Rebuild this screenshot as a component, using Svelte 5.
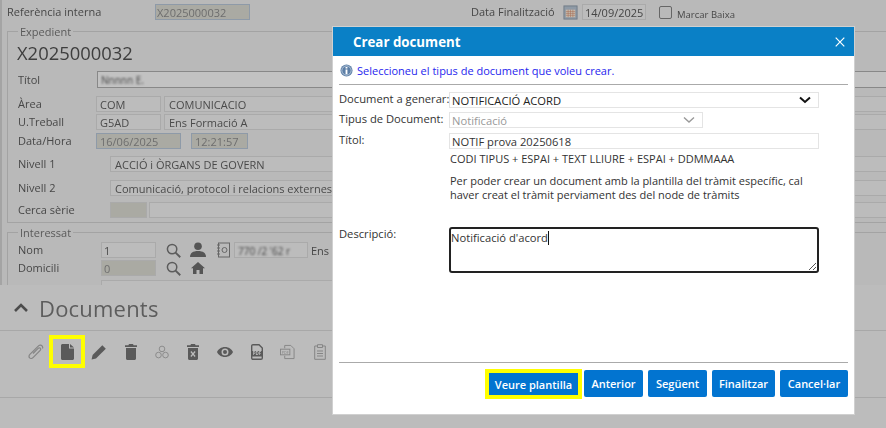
<script>
  const toolIcons = [
    { name: 'pencil', w: 16, vb: '0 0 16 16', d: 'M11.300 1.200l3.500 3.500L5 14.500l-4.400 1 1-4.500z' },
    { name: 'trash', w: 12, vb: '0 0 12 16', d: 'M4 0h4l.6 1.300H12v1.600H0V1.300h3.400zM1 4h10v10.500c0 .8-.7 1.500-1.500 1.500h-7C1.700 16 1 15.300 1 14.500z' },
    { name: 'recycle', light: true, w: 14, vb: '0 0 16 16', d: 'M4.800 4.500a3.200 3.200 0 106.400 0 3.200 3.200 0 10-6.400 0zM.8 11.500a3.200 3.200 0 106.400 0 3.200 3.200 0 10-6.400 0zM8.800 11.500a3.200 3.200 0 106.400 0 3.200 3.200 0 10-6.400 0z', stroke: true },
    { name: 'trashx', w: 12, vb: '0 0 12 16', d: 'M4 0h4l.6 1.300H12v1.600H0V1.300h3.400zM1 4h10v10.500c0 .8-.7 1.500-1.500 1.500h-7C1.700 16 1 15.300 1 14.500zM4.400 7L3.400 8l1.700 2-1.700 2 1 1L6 11l1.600 2 1-1-1.700-2 1.700-2-1-1L6 9z', evenodd: true },
    { name: 'eye', w: 16, vb: '0 0 16 12', d: 'M8 1c3.800 0 6.800 2.200 8 5-1.200 2.800-4.200 5-8 5S1.200 8.800 0 6c1.200-2.800 4.200-5 8-5zm0 1.500a3.500 3.500 0 100 7 3.500 3.500 0 000-7zm0 1.500a2 2 0 110 4 2 2 0 010-4z', evenodd: true }
  ];
</script>

<div class="page">
  <div class="strip"></div>
  <div class="soft">
  <div class="form">
    <div class="top">
      <span class="lab ref">Referència interna</span>
      <span class="fld ro refv">X2025000032</span>
      <span class="lab fin">Data Finalització</span>
      <svg class="cal" viewBox="0 0 16 16" width="15" height="15" aria-hidden="true">
        <rect x="1" y="1" width="14" height="14" fill="#8f9aa6" stroke="#6f7a86"/>
        <rect x="3" y="5" width="10" height="8" fill="#c5b9ab"/>
        <path d="M3 7h10M3 9h10M3 11h10M5.500 5v8M8 5v8M10.500 5v8" stroke="#a8705a" stroke-width=".6"/>
      </svg>
      <span class="fld date">14/09/2025</span>
      <span class="check"></span>
      <span class="baixa">Marcar Baixa</span>
    </div>

    <fieldset class="expedient">
      <legend>Expedient</legend>
      <div class="bigcode">X2025000032</div>
      <div class="row titol"><span class="lab l1">Títol</span><span class="fld tit"><span class="smudge">Nnnnn E.</span></span></div>
      <div class="row area"><span class="lab l1">Àrea</span><span class="fld c1">COM</span><span class="fld c2">COMUNICACIO</span></div>
      <div class="row treball"><span class="lab l1">U.Treball</span><span class="fld c1">G5AD</span><span class="fld c2">Ens Formació A</span></div>
      <div class="row hora"><span class="lab l1">Data/Hora</span><span class="fld ro d1">16/06/2025</span><span class="fld ro d2">12:21:57</span></div>
      <div class="row n1"><span class="lab l2">Nivell 1</span><span class="fld wide">ACCIÓ i ÒRGANS DE GOVERN</span></div>
      <div class="row n2"><span class="lab l2">Nivell 2</span><span class="fld wide">Comunicació, protocol i relacions externes</span></div>
      <div class="row serie"><span class="lab l2">Cerca sèrie</span><span class="fld ro s1"></span><span class="fld s2"></span></div>
    </fieldset>

    <fieldset class="interessat">
      <legend>Interessat</legend>
      <div class="row nom">
        <span class="lab l3">Nom</span><span class="fld i1">1</span>
        <svg class="search" viewBox="0 0 16 16" width="15" height="15" aria-hidden="true"><circle cx="6.500" cy="6.500" r="5" fill="none" stroke="#5c5c5c" stroke-width="1.600"/><path d="M10.200 10.200l5 5" stroke="#5c5c5c" stroke-width="2"/></svg>
        <svg class="person" viewBox="0 0 16 16" width="16" height="16" aria-hidden="true"><circle cx="8" cy="4.200" r="3.800" fill="#555"/><path d="M0 15c0-4 3-6 8-6s8 2 8 6z" fill="#555"/></svg>
        <svg class="book" viewBox="0 0 13 16" width="13" height="16" aria-hidden="true"><rect x="1.500" y="1" width="11" height="14" fill="none" stroke="#666"/><path d="M0 3h3M0 6h3M0 9h3M0 12h3" stroke="#666"/><circle cx="7.500" cy="8" r="2.500" fill="none" stroke="#666"/></svg>
        <span class="fld i2"><span class="smudge">770 /2 '62 r</span></span>
        <span class="ens">Ens I</span>
      </div>
      <div class="row dom">
        <span class="lab l3">Domicili</span><span class="fld ro i1 plain">0</span>
        <svg class="search" viewBox="0 0 16 16" width="15" height="15" aria-hidden="true"><circle cx="6.500" cy="6.500" r="5" fill="none" stroke="#5c5c5c" stroke-width="1.600"/><path d="M10.200 10.200l5 5" stroke="#5c5c5c" stroke-width="2"/></svg>
        <svg class="home" viewBox="0 0 14 12" width="14" height="12" aria-hidden="true"><path d="M7 0l7 6.300h-2V12H8.500V8h-3v4H2V6.300H0z" fill="#555"/></svg>
      </div>
      <span class="fld stub"></span>
    </fieldset>
  </div>

  <section class="docs">
    <div class="docs-head">
      <svg class="chev" viewBox="0 0 16 10" width="16" height="10" aria-hidden="true"><path d="M2 8l6-6 6 6" fill="none" stroke="#4c4c4c" stroke-width="2.600"/></svg>
      <h2>Documents</h2>
    </div>
    <div class="tools">
      <svg class="tool clip" viewBox="0 0 16 16" width="16" height="16" aria-hidden="true"><path d="M14.500 4.500c.8-1.500-.6-3.500-2.500-3.300-.8.1-1.400.5-2 1.100L1.900 10.400c-1.100 1.100-1.200 2.500-.3 3.400s2.300.9 3.400-.2l7.200-7.200c.7-.7.7-1.600.1-2.200s-1.500-.5-2.200.2L5 9.500" fill="none" stroke="currentColor" stroke-width="1.200"/></svg>
      <span class="hl"><svg viewBox="0 0 13 16" width="13" height="16" aria-hidden="true"><path d="M1.500 0H8v4.500h5v10c0 .8-.7 1.500-1.500 1.500h-10C.7 16 0 15.300 0 14.500v-13C0 .7.700 0 1.500 0zM9 0l4 3.500H9z" fill="#5a5a5a"/></svg></span>
      {#each toolIcons as icon}
        {#if icon.stroke}
          <svg class="tool light" viewBox={icon.vb} width={icon.w} height="16" aria-hidden="true"><path d={icon.d} fill="none" stroke="currentColor" stroke-width="1"/></svg>
        {:else}
          <svg class="tool" viewBox={icon.vb} width={icon.w} height="16" aria-hidden="true"><path d={icon.d} fill="currentColor" fill-rule={icon.evenodd ? 'evenodd' : 'nonzero'}/></svg>
        {/if}
      {/each}
      <svg class="tool" viewBox="0 0 12 16" width="12" height="16" aria-hidden="true">
        <path d="M2 .7h6L11.300 4v10c0 .7-.6 1.300-1.300 1.300H2c-.7 0-1.300-.6-1.300-1.300V2C.7 1.300 1.300.7 2 .7z" fill="none" stroke="currentColor" stroke-width="1.400"/>
        <rect x=".5" y="7" width="11" height="5.500" fill="currentColor"/>
        <text x="6" y="11.300" font-size="4.500" font-weight="700" text-anchor="middle" fill="#bcbcbc">PDF</text>
      </svg>
      <svg class="tool light copy" viewBox="0 0 16 16" width="15" height="16" aria-hidden="true">
        <path d="M5 4V1h6.500L15 4.500V15H5v-3" fill="none" stroke="currentColor"/>
        <rect x=".5" y="5" width="10" height="6" fill="none" stroke="currentColor"/>
        <text x="5.500" y="9.600" font-size="4" text-anchor="middle" fill="currentColor">PDF</text>
      </svg>
      <svg class="tool light" viewBox="0 0 12 16" width="12" height="16" aria-hidden="true"><path d="M3.500 2H.7v13.300h10.600V2H8.500M3.500.7h5v2.800h-5zM3 7h6M3 9.500h6M3 12h6" fill="none" stroke="currentColor"/></svg>
    </div>
  </section>
  </div>

  <div class="modal" role="dialog">
    <header>
      <h1>Crear document</h1>
      <svg viewBox="0 0 10 10" width="10" height="10" aria-hidden="true"><path d="M.7.700l8.600 8.600M9.300.700L.7 9.300" stroke="#fff" stroke-width="1.200"/></svg>
    </header>
    <div class="info">
      <svg viewBox="0 0 14 14" width="13" height="13" aria-hidden="true"><circle cx="7" cy="7" r="6.500" fill="#5d7fa6"/><circle cx="7" cy="7" r="5" fill="none" stroke="#cfdcea" stroke-width=".8"/><path d="M6 3.200h2v1.600H6zM6 6h2v5H6z" fill="#fff"/></svg>
      <span>Seleccioneu el tipus de document que voleu crear.</span>
    </div>
    <div class="mform">
      <div class="mrow r1">
        <span class="mlabel">Document a generar:</span>
        <span class="box sel">NOTIFICACIÓ ACORD
          <svg viewBox="0 0 12 8" width="12" height="8" aria-hidden="true"><path d="M1 1.500l5 4.500 5-4.500" fill="none" stroke="#111" stroke-width="2"/></svg>
        </span>
      </div>
      <div class="mrow r2">
        <span class="mlabel">Tipus de Document:</span>
        <span class="box sel dis">Notificació
          <svg viewBox="0 0 12 8" width="12" height="8" aria-hidden="true"><path d="M1 1.500l5 4.500 5-4.500" fill="none" stroke="#999" stroke-width="1.400"/></svg>
        </span>
      </div>
      <div class="mrow r3">
        <span class="mlabel">Títol:</span>
        <div class="col">
          <span class="box full">NOTIF prova 20250618</span>
          <p class="codi">CODI TIPUS + ESPAI + TEXT LLIURE + ESPAI + DDMMAAA</p>
          <p class="per">Per poder crear un document amb la plantilla del tràmit específic, cal<br>haver creat el tràmit perviament des del node de tràmits</p>
        </div>
      </div>
      <div class="mrow r4">
        <span class="mlabel">Descripció:</span>
        <div class="area-box">Notificació d'acord<i class="caret"></i>
          <svg viewBox="0 0 10 10" width="10" height="10" aria-hidden="true"><path d="M9 2L2 9M9 6L6 9" stroke="#555"/></svg>
        </div>
      </div>
    </div>
    <footer>
      <button class="primary">Veure plantilla</button>
      <button class="b-ant">Anterior</button>
      <button class="b-seg">Següent</button>
      <button class="b-fin">Finalitzar</button>
      <button class="b-can">Cancel·lar</button>
    </footer>
  </div>
</div>

<style>
  :global(body) { margin: 0; background: #b9b9b9; }
  .page {
    position: relative; width: 886px; height: 428px; overflow: hidden;
    background: #b9b9b9; color: #474747;
    font-family: "Open Sans", "Liberation Sans", sans-serif; font-size: 11px;
  }
  .soft { filter: blur(.4px); }
  .strip { position: absolute; left: 0; top: 0; width: 2px; height: 292px; background: #a4a4a4; }
  .form { height: 285px; padding: 4px 0 0 7px; box-sizing: border-box; overflow: hidden; }
  .top { display: flex; align-items: center; height: 16px; }
  .lab { line-height: 16px; white-space: nowrap; }
  .ref { width: 148px; }
  .fld {
    display: block; box-sizing: border-box; height: 16px; line-height: 15px; padding-left: 3px;
    border: 1px solid #aaa; background: #bcbcbc; white-space: nowrap; overflow: hidden; flex: none; color: #4a4a4a;
  }
  .ro { background: #aaaaa3; border: 1px solid #8e9aa8; color: #6e6e6e; }
  .plain { border-color: #aaa; }
  .refv { width: 95px; padding-left: 1px; }
  .fin { margin-left: 221px; width: 92px; }
  .cal { flex: none; }
  .date { width: 64px; margin-left: 4px; color: #444; padding-left: 2px; }
  .check { flex: none; width: 11px; height: 11px; border: 1px solid #666; border-radius: 2px; margin-left: 13px; }
  .baixa { font-size: 9.500px; margin-left: 5px; position: relative; top: 2px; }

  fieldset { margin: 0; padding: 0; border: 1px solid #a3a3a3; position: relative; box-sizing: border-box; }
  legend { font-size: 11px; margin-left: 10px; padding: 0 2px; color: #5a5a5a; line-height: 13px; }
  .expedient { margin-top: 5px; height: 198px; width: 900px; }
  .bigcode { font-size: 18.400px; line-height: 26px; margin: 2px 0 0 9px; color: #3e3e3e; }
  .row { display: flex; align-items: center; }
  .l1 { width: 80px; margin-left: 10px; }
  .l2 { width: 92px; margin-left: 10px; }
  .titol { margin-top: 5px; }
  .tit { flex: 1; height: 17px; border: 1px solid #888; margin-left: -1px; background: #c2c2c2; }
  .smudge { filter: blur(1.200px); font-size: 10px; color: #444; }
  .area { margin-top: 8px; }
  .treball { margin-top: 2px; }
  .hora { margin-top: 3px; }
  .c1 { width: 65px; margin-left: -2px; }
  .c2 { flex: 1; margin-left: 3px; padding-left: 4px; }
  .d1 { width: 85px; margin-left: -2px; }
  .d2 { width: 57px; margin-left: 10px; }
  .n1 { margin-top: 7px; height: 16px; }
  .n2 { margin-top: 8px; height: 16px; }
  .serie { margin-top: 6px; height: 16px; }
  .wide { flex: 1; padding-left: 4px; margin-left: 0; }
  .s1 { width: 37px; border-color: #aaa; flex: none; }
  .s2 { flex: 1; margin-left: 2px; }

  .interessat { margin-top: 3px; height: 70px; width: 900px; }
  .l3 { width: 83px; margin-left: 10px; }
  .nom { height: 16px; margin-top: 3px; }
  .i1 { width: 55px; padding-left: 2px; }
  .search { margin-left: 10px; flex: none; }
  .person { margin-left: 9px; flex: none; }
  .book { margin-left: 11px; flex: none; }
  .i2 { width: 74px; margin-left: 4px; }
  .ens { margin-left: 3px; }
  .dom { margin-top: 2px; height: 16px; }
  .home { margin-left: 10px; flex: none; }
  .stub { width: 300px; margin: 4px 0 0 93px; }

  .docs { height: 143px; background: #bcbcbc; }
  .docs-head {
    display: flex; align-items: center; gap: 10px; height: 46px; padding: 0 0 0 13px;
    border-bottom: 1px solid #a8a8a8; box-sizing: border-box;
  }
  .chev { flex: none; }
  h2 { margin: 0; font-weight: 400; font-size: 22px; letter-spacing: .2px; color: #5d5d5d; line-height: 30px; }
  .tools {
    display: flex; align-items: center; height: 67px; padding: 0 0 25px 28px; box-sizing: border-box;
    border-bottom: 1px solid #a8a8a8; color: #5a5a5a;
  }
  .tool { flex: none; margin-right: 18px; }
  .clip { margin-right: 5px; color: #858585; }
  .copy { margin-left: -1px; margin-right: 19px; }
  .light { color: #858585; }
  .hl {
    flex: none; display: flex; align-items: center; justify-content: center;
    width: 36px; height: 33px; box-sizing: border-box; border: 4px solid #ffff00; margin-right: 6px;
  }

  .modal {
    position: absolute; left: 333px; top: 27px; width: 521px; height: 387px;
    background: #fff; color: #333; display: flex; flex-direction: column;
    box-shadow: 0 0 0 1px #d0d0d0;
  }
  header {
    flex: none; height: 29px; background: #0a80c6; color: #fff;
    display: flex; align-items: center; justify-content: space-between; padding: 0 9px 0 20px;
  }
  h1 { margin: 0; font-size: 13.300px; font-weight: 700; }
  .info {
    flex: none; height: 29px; margin: 0 6px; display: flex; align-items: center; gap: 4px;
    padding-left: 1px; border-bottom: 1px solid #aaa; box-sizing: border-box; color: #2626ee; font-size: 11px;
  }
  .mform { flex: 1; padding: 7px 0 0 6px; font-size: 11.200px; color: #333; }
  .mrow { display: flex; align-items: flex-start; }
  .mlabel { width: 110px; flex: none; line-height: 14px; white-space: nowrap; }
  .box {
    display: flex; align-items: center; justify-content: space-between; box-sizing: border-box;
    height: 16px; border: 1px solid #e4e4e4; padding: 0 7px 0 2px; color: #222; white-space: nowrap;
  }
  .sel { width: 370px; }
  .dis { width: 254px; color: #999; }
  .full { width: 370px; color: #333; }
  .r2 { margin-top: 4px; }
  .r3 { margin-top: 5px; }
  .r4 { margin-top: 25px; }
  .col { width: 380px; }
  p { margin: 0; font-size: 11px; line-height: 14px; padding-left: 1px; white-space: nowrap; }
  .codi { margin-top: 3px; }
  .per { margin-top: 8px; }
  .area-box {
    position: relative; box-sizing: border-box; width: 370px; height: 46px;
    border: 2px solid #222; border-radius: 3px; padding: 2px 0 0 0; line-height: 14px; color: #333;
  }
  .area-box svg { position: absolute; right: 0; bottom: 0; }
  .caret { display: inline-block; width: 1px; height: 14px; background: #111; vertical-align: top; }
  footer {
    flex: none; height: 52px; margin: 0 6px; border-top: 1px solid #aaa; box-sizing: border-box;
    display: flex; justify-content: flex-end; align-items: flex-start; padding-top: 7px; gap: 5px;
  }
  button {
    height: 27px; border: none; border-radius: 2px; background: #0274d0; color: #fff; padding: 0;
    font-family: inherit; font-size: 11px; font-weight: 600; flex: none;
  }
  .primary { width: 97px; height: 30px; margin: -1px -3px 0 0; border: 4px solid #ffff00; border-radius: 0; }
  .b-ant { width: 59px; }
  .b-seg { width: 59px; }
  .b-fin { width: 63px; }
  .b-can { width: 68px; }
</style>
